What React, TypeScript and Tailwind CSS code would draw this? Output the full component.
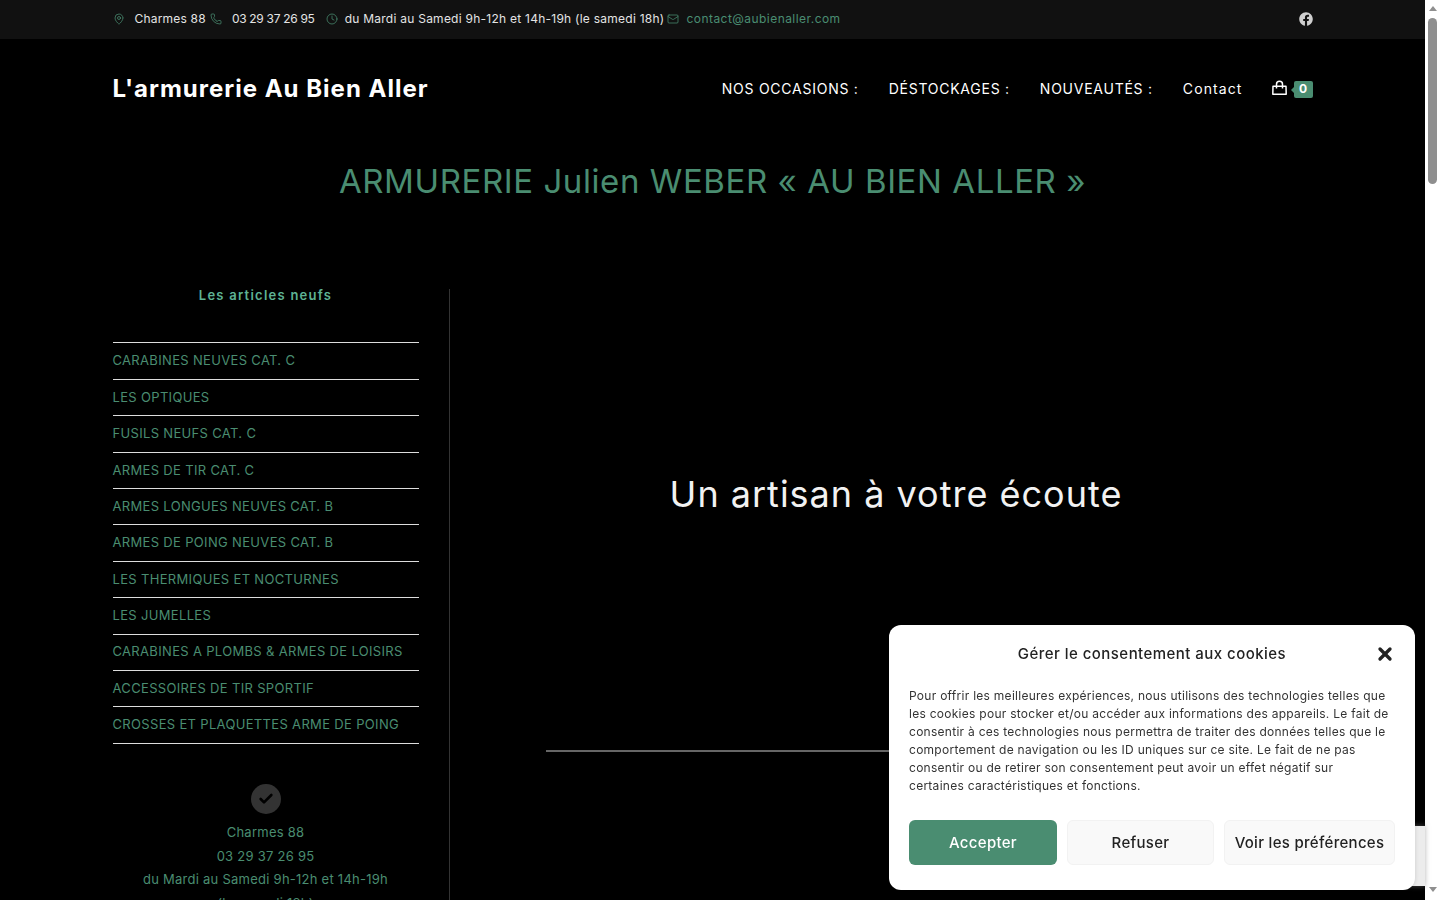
import { Check, Clock, Mail, MapPin, Phone, X } from "lucide-react";
import { FaFacebook } from "react-icons/fa";
import React from "react";

const categories = [
  "CARABINES NEUVES CAT. C",
  "LES OPTIQUES",
  "FUSILS NEUFS CAT. C",
  "ARMES DE TIR CAT. C",
  "ARMES LONGUES NEUVES CAT. B",
  "ARMES DE POING NEUVES CAT. B",
  "LES THERMIQUES ET NOCTURNES",
  "LES JUMELLES",
  "CARABINES A PLOMBS & ARMES DE LOISIRS",
  "ACCESSOIRES DE TIR SPORTIF",
  "CROSSES ET PLAQUETTES ARME DE POING",
];

const navItems = ["NOS OCCASIONS :", "DÉSTOCKAGES :", "NOUVEAUTÉS :"];

const App = () => {
  return (
    <div className="h-[900px] overflow-hidden bg-black text-white font-['Inter','Liberation_Sans',sans-serif]">
      {/* Top bar */}
      <div className="w-[1425px] h-[39px] bg-[#111111]">
        <div className="mx-auto w-[1200px] h-full pb-[2px] flex items-center justify-between text-[12px] text-[#e4e4e4]">
          <div className="flex items-center">
            <MapPin className="w-3 h-3 text-[#4a8d71] mr-[10px]" strokeWidth={1.5} />
            <span className="tracking-[0.2px]">Charmes 88</span>
            <Phone className="w-3 h-3 text-[#4a8d71] ml-[4px] mr-[10px]" strokeWidth={1.5} />
            <span className="tracking-[-0.3px]">03 29 37 26 95</span>
            <Clock className="w-3 h-3 text-[#4a8d71] ml-[11px] mr-[7px]" strokeWidth={1.5} />
            <span className="tracking-[0.25px]">du Mardi au Samedi 9h-12h et 14h-19h (le samedi 18h)</span>
            <Mail className="w-3 h-3 text-[#4a8d71] ml-[3px] mr-[7px]" strokeWidth={1.5} />
            <span className="tracking-[0.45px] text-[#4a8d71]">contact@aubienaller.com</span>
          </div>
          <FaFacebook className="w-[14px] h-[14px] text-[#cfcfcf]" />
        </div>
      </div>

      {/* Header */}
      <div className="w-[1425px]">
        <div className="mx-auto w-[1200px] h-[100px] flex items-center justify-between">
          <div className="text-[24px] font-bold tracking-[1px]">L'armurerie Au Bien Aller</div>
          <nav className="flex items-center gap-[30px] text-[14px] tracking-[0.75px]">
            {navItems.map((item) => (
              <a key={item} className="mb-[2px]">
                {item}
              </a>
            ))}
            <a className="mb-[2px] -mr-[1px] tracking-[1.1px]">Contact</a>
            <div className="flex items-center gap-[7px]">
              <svg viewBox="0 0 15 15" className="w-[15px] h-[15px] -mt-[3px]" fill="none" stroke="currentColor" strokeWidth="1.5">
                <path d="M1 6.2h13l.2 8H.8z" strokeLinejoin="round" />
                <path d="M4.5 8.5V4.2a3 3 0 0 1 6 0v4.3" />
              </svg>
              <span className="relative flex items-center justify-center w-[19px] h-[17px] rounded-[2px] bg-[#4a8d71] text-[12px] font-bold tracking-normal">
                <span className="absolute -left-[3px] top-[6px] w-0 h-0 border-y-[3px] border-y-transparent border-r-[3px] border-r-[#4a8d71]" />
                0
              </span>
            </div>
          </nav>
        </div>

        <h1 className="text-center text-[33px] leading-[42px] mt-[21px] tracking-[0.58px] text-[#4a8d71]">
          ARMURERIE Julien WEBER « AU BIEN ALLER »
        </h1>

        {/* Content */}
        <div className="mx-auto w-[1200px] flex mt-[87px]">
          <aside className="w-[337px] h-[700px] border-r border-[#333333] pr-[30px] shrink-0">
            <h3 className="text-center text-[13px] font-semibold leading-[13px] tracking-[1.25px] text-[#5eb394]">
              Les articles neufs
            </h3>
            <ul className="mt-[40.4px] border-t border-[#dddddd]">
              {categories.map((cat) => (
                <li
                  key={cat}
                  className="h-[36.4px] flex items-center border-b border-[#dddddd] text-[13px] tracking-[0.33px] text-[#4a8d71]"
                >
                  {cat}
                </li>
              ))}
            </ul>
            <div className="mt-[40.6px] flex flex-col items-center">
              <span className="flex items-center justify-center w-[30px] h-[30px] rounded-full bg-[#333333]">
                <Check className="w-4 h-4 text-black" strokeWidth={4} />
              </span>
              <div className="mt-[7px] text-center text-[13px] leading-[23.4px] tracking-[0.25px] text-[#4a8d71]">
                <div>Charmes 88</div>
                <div>03 29 37 26 95</div>
                <div>du Mardi au Samedi 9h-12h et 14h-19h</div>
                <div>(le samedi 18h)</div>
              </div>
            </div>
          </aside>

          <main className="flex-1 pl-[30px]">
            <h2 className="mt-[181px] text-center text-[36px] leading-[48px] tracking-[1px] text-[#f2f2f2]">
              Un artisan à votre écoute
            </h2>
            <div className="mt-[232px] ml-[66px] h-[2px] bg-[#666666]" />
          </main>
        </div>
      </div>

      {/* Scrollbar */}
      <div className="fixed right-0 top-0 bottom-0 w-[15px] bg-white flex flex-col items-center">
        <div className="mt-[6px] w-0 h-0 border-x-[4.5px] border-x-transparent border-b-[5px] border-b-[#8f8f8f]" />
        <div className="mt-[7px] w-[9px] h-[166px] rounded-full bg-[#8f8f8f]" />
        <div className="mt-auto mb-[8px] w-0 h-0 border-x-[4.5px] border-x-transparent border-t-[5px] border-t-[#8f8f8f]" />
      </div>

      {/* Recaptcha badge peeking out behind the dialog */}
      <div className="fixed right-[15px] top-[826px] w-[30px] h-[60px] bg-[#ececec] shadow-[0_0_5px_rgba(128,128,128,0.6)]" />

      {/* Cookie dialog */}
      <div className="fixed left-[889px] top-[625px] w-[526px] h-[265px] rounded-[12px] bg-white px-[20px] text-[#222222] shadow-[0_0_4px_rgba(0,0,0,0.15)]">
        <div className="relative h-[57px] pt-[2px] flex items-center justify-center">
          <span className="text-[15px] font-medium tracking-[0.46px]">Gérer le consentement aux cookies</span>
          <X className="absolute right-0 top-[19px] w-[20px] h-[20px]" strokeWidth={4} />
        </div>
        <p className="mt-[5px] pr-[6px] text-[12px] leading-[18px] tracking-[0.27px] text-[#333333]">
          Pour offrir les meilleures expériences, nous utilisons des technologies telles que les cookies pour stocker et/ou accéder aux informations des appareils. Le fait de consentir à ces technologies nous permettra de traiter des données telles que le comportement de navigation ou les ID uniques sur ce site. Le fait de ne pas consentir ou de retirer son consentement peut avoir un effet négatif sur certaines caractéristiques et fonctions.
        </p>
        <div className="mt-[25px] flex gap-[10px] text-[15px] tracking-[0.3px]">
          <button className="w-[148px] h-[45px] pt-[1px] rounded-[6px] bg-[#4a8d71] font-medium text-white">
            Accepter
          </button>
          <button className="w-[147px] h-[45px] pt-[1px] rounded-[6px] border border-[#f2f2f2] bg-[#f9f9f9] font-medium text-[#222222]">
            Refuser
          </button>
          <button className="w-[171px] h-[45px] pt-[1px] rounded-[6px] border border-[#f2f2f2] bg-[#f9f9f9] font-medium text-[#222222]">
            Voir les préférences
          </button>
        </div>
      </div>
    </div>
  );
};

export default App;
